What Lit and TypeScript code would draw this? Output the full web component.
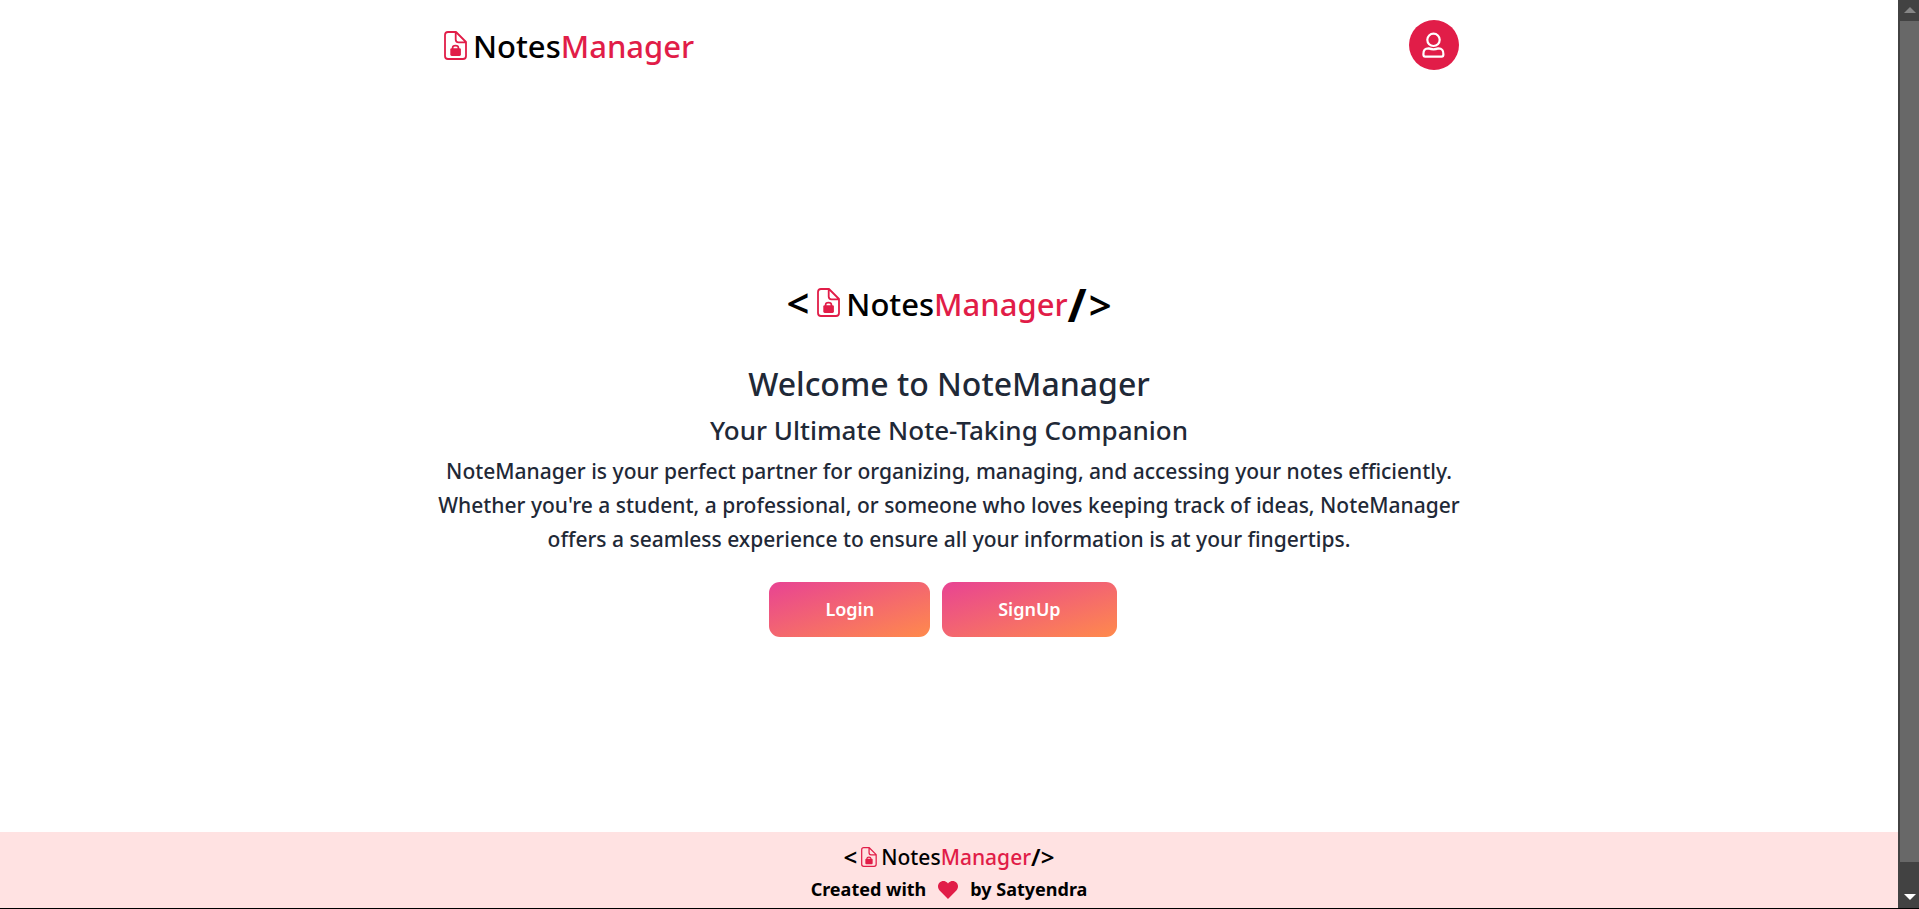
import { LitElement, html, css } from "lit";
import { customElement, property } from "lit/decorators.js";

@customElement("file-lock-icon")
class FileLockIcon extends LitElement {
  static styles = css`
    :host { display: inline-flex; color: #e11d48; }
    .icon { display: block; height: 100%; width: auto; }
  `;
  render() {
    return html`<svg class="icon" viewBox="0 0 23 29" fill="none" stroke="currentColor" aria-hidden="true">
      <path d="M12 1H4Q1 1 1 4V25Q1 28 4 28H19Q22 28 22 25V11L12 1ZM11.7 1V8.5Q11.7 11.3 14.5 11.3H22" stroke-width="1.8" stroke-linejoin="round" />
      <path d="M8.6 18V16.8Q8.6 14.6 11.5 14.6Q14.4 14.6 14.4 16.8V18" stroke-width="1.7" />
      <rect x="6.3" y="17.2" width="10.6" height="7.8" rx="1.4" fill="currentColor" stroke="none" />
    </svg>`;
  }
}

@customElement("brand-logo")
class BrandLogo extends LitElement {
  @property({ type: Boolean }) tagged = false;
  @property({ type: Boolean, reflect: true }) small = false;
  static styles = css`
    :host { display: flex; color: #000; font-size: 31px; line-height: 47px; font-weight: 500; }
    .logo { display: flex; align-items: center; }
    .icon { height: 29px; margin-right: 6px; }
    .name { padding-top: 3px; }
    .accent { color: #e11d48; }
    .mark { font-size: 40px; font-weight: 600; }
    .open { margin-right: 8px; }
    .close { display: flex; align-items: center; gap: 2px; padding-top: 3px; }
    .slash { font-size: 46px; font-weight: 700; }
    :host([small]) { font-size: 21px; line-height: 32px; }
    :host([small]) .icon { height: 20px; margin-right: 4px; }
    :host([small]) .name { padding-top: 0; }
    :host([small]) .open { margin-right: 4px; }
    :host([small]) .close { gap: 0; padding-top: 1px; }
    :host([small]) .mark { font-size: 24px; }
    :host([small]) .slash { font-size: 24px; font-weight: 600; }
  `;
  render() {
    return html`<div class="logo">
      ${this.tagged ? html`<span class="mark open">&lt;</span>` : ""}
      <file-lock-icon class="icon"></file-lock-icon>
      <span class="name">Notes<span class="accent">Manager</span></span>
      ${this.tagged ? html`<span class="mark close"><span class="slash">/</span>&gt;</span>` : ""}
    </div>`;
  }
}

@customElement("app-root")
class AppRoot extends LitElement {
  static styles = css`
    :host {
      display: grid;
      grid-template-columns: 1fr 21px;
      height: 100vh;
      box-sizing: border-box;
      border-bottom: 1px solid #000;
      overflow: hidden;
      background: #fff;
      color: #1f2937;
      font-family: "Noto Sans", "Open Sans", sans-serif;
    }
    .page { display: flex; flex-direction: column; min-width: 0; }
    .header {
      display: flex; justify-content: space-between; align-items: center;
      width: 100%; max-width: 1024px; box-sizing: border-box;
      margin: 0 auto; padding: 20px 2px 20px 7px;
    }
    .avatar {
      display: grid; place-items: center; width: 50px; height: 50px;
      padding: 0; border: 0; border-radius: 50%; background: #e11d48; color: #fff;
    }
    .hero {
      flex: 1; display: flex; flex-direction: column; align-items: center;
      justify-content: center; text-align: center;
    }
    .title { margin: 32px 0 0; font-size: 32px; line-height: 48px; font-weight: 500; }
    .subtitle { margin: 0; font-size: 26px; line-height: 44px; font-weight: 500; }
    .copy { margin: 2px 0 26px; max-width: 1040px; font-size: 21px; line-height: 34px; font-weight: 500; }
    .actions { display: flex; gap: 12px; margin: 0 12px 8px 0; }
    .action {
      height: 55px; padding: 0 56px; border: 0; border-radius: 11px;
      background: linear-gradient(to bottom right, #e84393, #ff8a4c);
      color: #fff; font: 600 18px/28px "Noto Sans", "Open Sans", sans-serif;
    }
    .footer {
      display: flex; flex-direction: column; align-items: center;
      padding: 8px 0 2px; background: #ffe2e2; color: #000;
    }
    .credit {
      display: flex; align-items: center; margin: 0;
      font-size: 18px; line-height: 33px; font-weight: 700;
    }
    .heart { margin: 0 12px; display: block; }
    .scrollbar {
      display: grid; grid-template-rows: 21px 841px 1fr;
      background: #424242; padding-left: 2px;
    }
    .thumb { background: #686868; }
    .arrow { display: block; margin: 0 auto; }
    .down { align-self: end; margin-bottom: 8px; }
    .up { margin-top: 7px; }
  `;
  render() {
    return html`
      <div class="page">
        <header class="header">
          <brand-logo></brand-logo>
          <button class="avatar" aria-label="Account">
            <svg width="24" height="26" viewBox="0 0 24 26" fill="none" stroke="#fff" stroke-width="2.2" aria-hidden="true">
              <circle cx="11.5" cy="7.8" r="6.2" />
              <path d="M1.4 22.2Q1.2 16.4 6.6 16.4Q11.5 18.2 16.4 16.4Q21.6 16.4 21.4 22.2Q21.4 24.6 19.6 24.6H3.2Q1.4 24.6 1.4 22.2Z" stroke-linejoin="round" />
            </svg>
          </button>
        </header>
        <main class="hero">
          <brand-logo tagged></brand-logo>
          <h1 class="title">Welcome to NoteManager</h1>
          <h2 class="subtitle">Your Ultimate Note-Taking Companion</h2>
          <p class="copy">NoteManager is your perfect partner for organizing, managing, and accessing your notes efficiently. Whether you're a student, a professional, or someone who loves keeping track of ideas, NoteManager offers a seamless experience to ensure all your information is at your fingertips.</p>
          <div class="actions">
            <button class="action">Login</button>
            <button class="action">SignUp</button>
          </div>
        </main>
        <footer class="footer">
          <brand-logo tagged small></brand-logo>
          <p class="credit">Created with
            <svg class="heart" width="20" height="18" viewBox="0 0 20 18" fill="#e11d48" role="img" aria-label="love">
              <path d="M10 18L1.6 9.6C-.5 7.4-.5 3.8 1.4 1.8C3.5-.5 7.1-.6 9.2 1.6L10 2.5L10.8 1.6C12.9-.6 16.5-.5 18.6 1.8C20.5 3.8 20.5 7.4 18.4 9.6Z" />
            </svg>by Satyendra</p>
        </footer>
      </div>
      <div class="scrollbar" aria-hidden="true">
        <svg class="arrow up" width="12" height="6" viewBox="0 0 12 6" fill="#868686"><path d="M6 0L12 6H0Z" /></svg>
        <div class="thumb"></div>
        <svg class="arrow down" width="12" height="6" viewBox="0 0 12 6" fill="#fff"><path d="M0 0H12L6 6Z" /></svg>
      </div>
    `;
  }
}
